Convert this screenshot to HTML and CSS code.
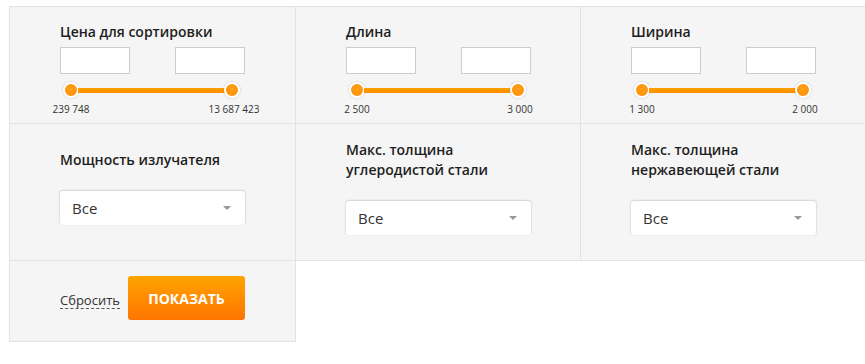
FILE: index.html
```html
<!DOCTYPE html>
<html>
<head>
  <meta charset="utf-8">
  <title>Фильтр</title>
  <link rel="stylesheet" href="styles.css">
</head>
<body>
  <form class="filters" autocomplete="off">
    <div class="cell cell-range">
      <div class="title">Цена для сортировки</div>
      <div class="pair">
        <input type="text" class="box-input">
        <input type="text" class="box-input">
      </div>
      <div class="slider">
        <span class="thumb"></span><span class="track"></span><span class="thumb"></span>
      </div>
      <div class="marks"><span>239 748</span><span>13 687 423</span></div>
    </div>

    <div class="cell cell-range">
      <div class="title">Длина</div>
      <div class="pair">
        <input type="text" class="box-input">
        <input type="text" class="box-input">
      </div>
      <div class="slider">
        <span class="thumb"></span><span class="track"></span><span class="thumb"></span>
      </div>
      <div class="marks"><span>2 500</span><span>3 000</span></div>
    </div>

    <div class="cell cell-range">
      <div class="title">Ширина</div>
      <div class="pair">
        <input type="text" class="box-input">
        <input type="text" class="box-input">
      </div>
      <div class="slider">
        <span class="thumb"></span><span class="track"></span><span class="thumb"></span>
      </div>
      <div class="marks"><span>1 300</span><span>2 000</span></div>
    </div>

    <div class="cell cell-select">
      <div class="title">Мощность излучателя</div>
      <div class="dropdown"><span>Все</span><i class="caret"></i></div>
    </div>

    <div class="cell cell-select">
      <div class="title">Макс. толщина<br>углеродистой стали</div>
      <div class="dropdown"><span>Все</span><i class="caret"></i></div>
    </div>

    <div class="cell cell-select">
      <div class="title">Макс. толщина<br>нержавеющей стали</div>
      <div class="dropdown"><span>Все</span><i class="caret"></i></div>
    </div>

    <div class="cell cell-actions">
      <a href="#" class="reset">Сбросить</a>
      <button type="submit" class="btn-show">Показать</button>
    </div>
  </form>
</body>
</html>
```

FILE: styles.css
```css
html, body {
  margin: 0;
  background: #fff;
  overflow: hidden;
  font-family: "Open Sans", "Liberation Sans", sans-serif;
  color: #222;
}
.filters {
  display: grid;
  grid-template-columns: 286px 285px 285px;
  grid-template-rows: 117px 137px 81px;
  margin: 6px 0 0 9px;
  border-top: 1px solid #e3e3e3;
  border-left: 1px solid #e3e3e3;
  width: max-content;
}
.cell {
  box-sizing: border-box;
  background: #f5f5f5;
  border-right: 1px solid #e3e3e3;
  border-bottom: 1px solid #e3e3e3;
  padding-left: 50px;
}
.title {
  font-size: 14px;
  font-weight: 600;
  line-height: 20px;
  color: #1e1e1e;
}

/* ranges */
.cell-range {
  padding-top: 15px;
}
.pair {
  display: flex;
  justify-content: space-between;
  width: 185px;
  margin-top: 5px;
}
.box-input {
  box-sizing: border-box;
  width: 70px;
  height: 27px;
  margin: 0;
  border: 1px solid #cdcdcd;
  background: #fff;
}
.slider {
  display: flex;
  align-items: center;
  width: 177px;
  margin: 8px 0 0 3px;
}
.thumb {
  box-sizing: border-box;
  width: 16px;
  height: 16px;
  border-radius: 50%;
  border: 2px solid #fff;
  background: radial-gradient(circle at 50% 40%, #ffa11a, #ff8a00);
  box-shadow: 0 0 2px rgba(0,0,0,.25);
  flex: none;
}
.track {
  flex: 1;
  height: 5px;
  margin: 0 -1px;
  background: linear-gradient(#ffa000, #ff8c00);
}
.marks {
  display: flex;
  justify-content: space-between;
  width: 223px;
  margin: 4px 0 0 -19px;
  font-size: 10px;
  line-height: 14px;
  color: #333;
}
.marks span {
  width: 60px;
  text-align: center;
}

/* selects */
.cell-select {
  display: flex;
  flex-direction: column;
  justify-content: center;
  padding-bottom: 10px;
}
.dropdown {
  box-sizing: border-box;
  display: flex;
  align-items: center;
  justify-content: space-between;
  width: 185px;
  height: 34px;
  margin-top: 21px;
  padding: 0 14px 0 12px;
  background: #fff;
  border-radius: 3px;
  box-shadow: 0 -1px 2px rgba(0,0,0,.12), 1px 0 2px rgba(0,0,0,.06), -1px 0 2px rgba(0,0,0,.06);
  font-size: 15px;
  color: #333;
}
.caret {
  width: 0;
  height: 0;
  border-left: 4px solid transparent;
  border-right: 4px solid transparent;
  border-top: 4px solid #999;
}

/* actions */
.cell-actions {
  display: flex;
  align-items: center;
  gap: 8px;
  padding-bottom: 6px;
}
.reset {
  font-size: 13px;
  color: #333;
  text-decoration: none;
  border-bottom: 1px dashed #555;
  line-height: 16px;
  margin-top: 5px;
}
.btn-show {
  width: 117px;
  height: 44px;
  border: none;
  border-radius: 3px;
  background: linear-gradient(#ffa400, #ff7500);
  color: #fff;
  font-family: "Open Sans", "Liberation Sans", sans-serif;
  font-weight: 700;
  font-size: 14px;
  text-transform: uppercase;
  padding: 0;
}
```
